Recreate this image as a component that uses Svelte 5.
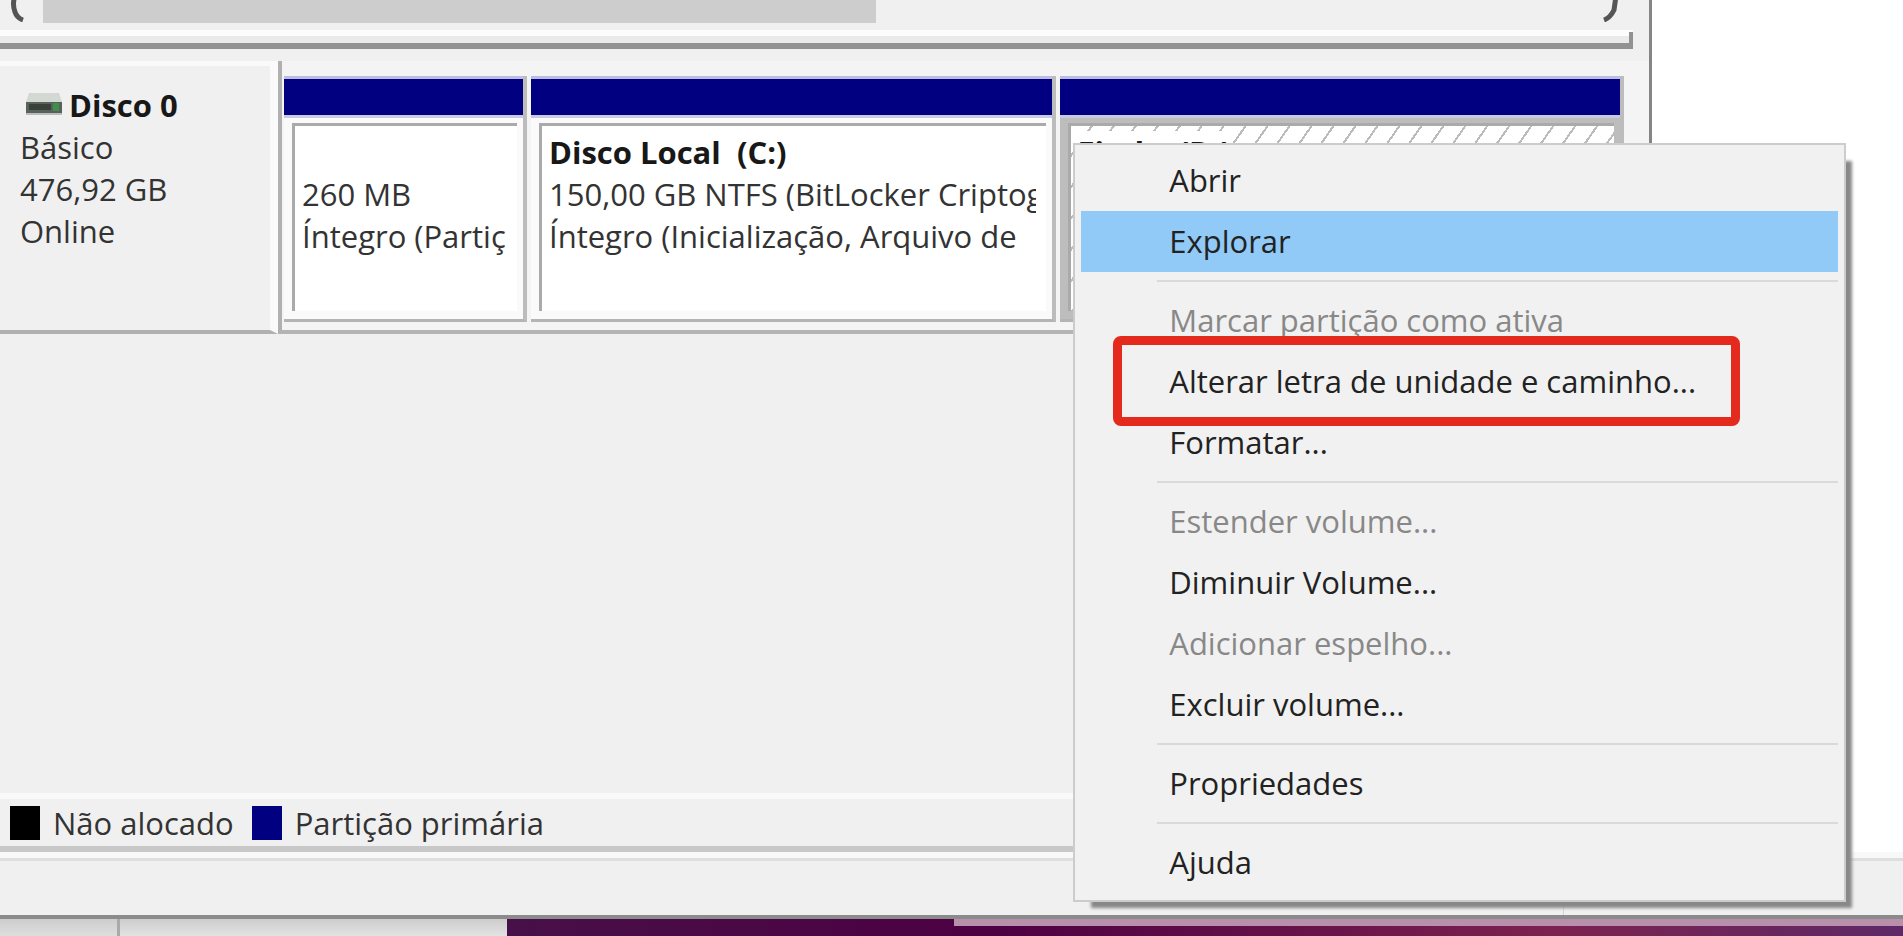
<script lang="ts">
	const partitions = [
		{ name: '', size: '260 MB', status: 'Íntegro (Partiç', kind: 'system' },
		{
			name: 'Disco Local  (C:)',
			size: '150,00 GB NTFS (BitLocker Criptog',
			status: 'Íntegro (Inicialização, Arquivo de',
			kind: 'local'
		},
		{ name: 'Finde  (D:)', size: '', status: '', kind: 'selected' }
	];

	const groups = [
		[{ label: 'Abrir' }, { label: 'Explorar', active: true }],
		[
			{ label: 'Marcar partição como ativa', disabled: true },
			{ label: 'Alterar letra de unidade e caminho...', marked: true },
			{ label: 'Formatar...' }
		],
		[
			{ label: 'Estender volume...', disabled: true },
			{ label: 'Diminuir Volume...' },
			{ label: 'Adicionar espelho...', disabled: true },
			{ label: 'Excluir volume...' }
		],
		[{ label: 'Propriedades' }],
		[{ label: 'Ajuda' }]
	];
</script>

<div class="desktop">
	<main class="window">
		<div class="scrollbar">
			<button type="button" class="scrollbar__arrow" aria-label="Rolar para a esquerda">
				<svg viewBox="0 0 20 30"><path d="M18 28 Q12 26 10 20 Q7 12 10 4" /></svg>
			</button>
			<div class="scrollbar__track"><div class="scrollbar__thumb"></div></div>
			<button
				type="button"
				class="scrollbar__arrow scrollbar__arrow--right"
				aria-label="Rolar para a direita"
			>
				<svg viewBox="0 0 20 30"><path d="M3 28 Q9 26 13 18 L15 4" /></svg>
			</button>
		</div>

		<section class="disk">
			<div class="disk__info">
				<h2>
					<svg class="disk__icon" viewBox="0 0 36 24">
						<path d="M3 1 H33 L36 10 H0 Z" fill="#d3d8d3" />
						<rect y="10" width="36" height="11" fill="#59615b" />
						<rect x="3" y="12" width="22" height="6" fill="#39413c" />
						<rect x="27" y="11" width="6" height="8" fill="#3f8f4c" />
						<rect y="21" width="36" height="2" fill="#b9bdb9" />
					</svg>Disco 0
				</h2>
				<p>Básico</p>
				<p>476,92 GB</p>
				<p>Online</p>
			</div>
			<div class="disk__partitions">
				{#each partitions as partition}
					<article class="partition partition--{partition.kind}">
						<div class="partition__bar"></div>
						<div class="partition__body">
							<h3>{partition.name}</h3>
							<p>{partition.size}</p>
							<p>{partition.status}</p>
						</div>
					</article>
				{/each}
			</div>
		</section>

		<footer class="legend">
			<span class="legend__swatch"></span>
			<span class="legend__label">Não alocado</span>
			<span class="legend__swatch legend__swatch--primary"></span>
			<span class="legend__label">Partição primária</span>
		</footer>
	</main>

	<div class="status"><div class="status__cell"></div></div>
	<div class="background">
		<div class="background__left"></div>
		<div class="background__middle"></div>
		<div class="background__wallpaper"><div class="background__edge"></div></div>
	</div>

	<div class="menu" role="menu">
		{#each groups as group, i}
			{#if i > 0}
				<hr />
			{/if}
			{#each group as item}
				<button
					type="button"
					role="menuitem"
					class="menu__item"
					class:menu__item--active={item.active}
					class:menu__item--marked={item.marked}
					disabled={item.disabled}
				>
					{item.label}
				</button>
			{/each}
		{/each}
	</div>
</div>

<style>
	:global(body) {
		background: #fff;
	}

	.desktop {
		position: relative;
		display: flex;
		flex-direction: column;
		min-height: 100vh;
		overflow: hidden;
		font-family: 'Open Sans', 'Noto Sans', sans-serif;
		font-size: 31px;
		line-height: 42px;
		color: #333;
	}

	button {
		font: inherit;
		color: inherit;
		border: 0;
		background: none;
		padding: 0;
	}

	h2,
	h3,
	p {
		margin: 0;
		font-size: inherit;
		white-space: pre;
	}

	h2,
	h3 {
		font-weight: 700;
		color: #181818;
	}

	.window {
		flex: 1;
		display: flex;
		flex-direction: column;
		width: 86.8%;
		box-sizing: border-box;
		border-right: 3px solid #858585;
		background: #f0f0f0;
	}

	.scrollbar {
		display: flex;
		height: 43px;
		margin-right: 16px;
		border-bottom: 6px solid #929292;
		background: linear-gradient(#f0f0f0 30px, #fcfcfc 30px, #fcfcfc 36px, #eaeaea 36px);
	}

	.scrollbar::after {
		content: '';
		width: 4px;
		margin-top: 32px;
		background: #929292;
	}

	.scrollbar__arrow {
		width: 43px;
		height: 30px;
	}

	.scrollbar__arrow svg {
		display: block;
		width: 20px;
		height: 30px;
		margin: -17px 0 0 5px;
		fill: none;
		stroke: #555;
		stroke-width: 5;
	}

	.scrollbar__arrow--right svg {
		margin: -17px 8px 0 auto;
	}

	.scrollbar__track {
		flex: 1;
	}

	.scrollbar__thumb {
		width: 54%;
		height: 23px;
		background: #cdcdcd;
	}

	.disk {
		display: flex;
		margin-top: 5px;
		height: 280px;
	}

	.disk__info {
		width: 248px;
		margin-top: 7px;
		padding: 18px 2px 0 20px;
		border-top: 5px solid #fafafa;
		border-right: 8px solid #fafafa;
		border-bottom: 4px solid #b0b0b0;
	}

	.disk__icon {
		width: 36px;
		height: 24px;
		margin: 0 7px 10px 6px;
		vertical-align: middle;
	}

	.disk__partitions {
		flex: 1;
		display: flex;
		gap: 4px;
		margin-top: 7px;
		padding: 15px 25px 8px 2px;
		border-left: 4px solid #b0b0b0;
		border-bottom: 4px solid #b4b4b4;
		background: #f4f4f4;
	}

	.partition {
		display: flex;
		flex-direction: column;
		box-sizing: border-box;
		min-width: 0;
		border-bottom: 3px solid #b4b4b4;
		border-right: 4px solid #bcbcbc;
		background: #fafafa;
	}

	.partition--system {
		flex: 241;
	}

	.partition--local {
		flex: 525;
	}

	.partition--selected {
		flex: 565;
		background: #bdbdbd;
	}

	.partition__bar {
		height: 36px;
		border-top: 3px solid #bdbde4;
		border-bottom: 3px solid #c9c9e2;
		background: #000080;
	}

	.partition__body {
		flex: 1;
		margin: 5px 6px 8px 8px;
		padding: 5px 10px 0 7px;
		border-top: 3px solid #aaa;
		border-left: 3px solid #aaa;
		background: #fff;
		overflow: hidden;
	}

	.partition__body h3 {
		min-height: 42px;
	}

	.partition__body p {
		overflow: hidden;
	}

	.partition--selected .partition__body {
		background: repeating-linear-gradient(125deg, #fff 0 16px, #bbb 16px 18px);
	}

	.partition--selected h3 {
		width: fit-content;
		background: #fff;
	}

	.legend {
		display: flex;
		align-items: center;
		height: 47px;
		margin-top: auto;
		padding-left: 10px;
		border-top: 6px solid #f9f9f9;
		border-bottom: 6px solid #c8c8c8;
	}

	.legend__swatch {
		width: 30px;
		height: 34px;
		background: #000;
	}

	.legend__swatch--primary {
		background: #000080;
	}

	.legend__label {
		margin: 0 18px 0 13px;
	}

	.status {
		height: 57px;
		border-top: 6px solid #f8f8f8;
		border-bottom: 4px solid #8b8b8b;
		background: linear-gradient(#dedede 3px, #f0f0f0 3px);
	}

	.status__cell {
		width: 82.2%;
		height: 100%;
		box-sizing: border-box;
		border-right: 1px solid #d4d4d4;
	}

	.background {
		display: flex;
		height: 17px;
	}

	.background__left {
		flex: 117;
		border-right: 3px solid #aaa;
		background: linear-gradient(#cdcdcd, #dedede);
	}

	.background__middle {
		flex: 387;
		background: linear-gradient(#cdcdcd, #e2e2e2);
	}

	.background__wallpaper {
		flex: 1396;
		background: linear-gradient(90deg, #471048, #4d0042 35%, #7c2250 75%, #5e2966);
	}

	.background__edge {
		height: 7px;
		margin-left: 32%;
		background: #b890ac;
	}

	.menu {
		position: absolute;
		left: 56.4%;
		top: 143px;
		width: 40.6%;
		box-sizing: border-box;
		padding: 5px 6px 7px;
		border: 2px solid #ccc;
		background: #f1f1f1;
		box-shadow: 12px 12px 3px -6px #888;
		color: #222;
	}

	.menu__item {
		position: relative;
		display: block;
		width: 100%;
		height: 61px;
		padding: 0 0 2px 88px;
		text-align: left;
	}

	.menu__item:disabled {
		color: #888;
	}

	.menu__item--active {
		background: #91c9f7;
	}

	.menu__item--marked::after {
		content: '';
		position: absolute;
		inset: -15px 98px -14px 32px;
		border: 9px solid #e42a1d;
		border-radius: 8px;
	}

	.menu hr {
		height: 2px;
		margin: 8px 0 8px 76px;
		border: 0;
		background: #dadada;
	}
</style>
